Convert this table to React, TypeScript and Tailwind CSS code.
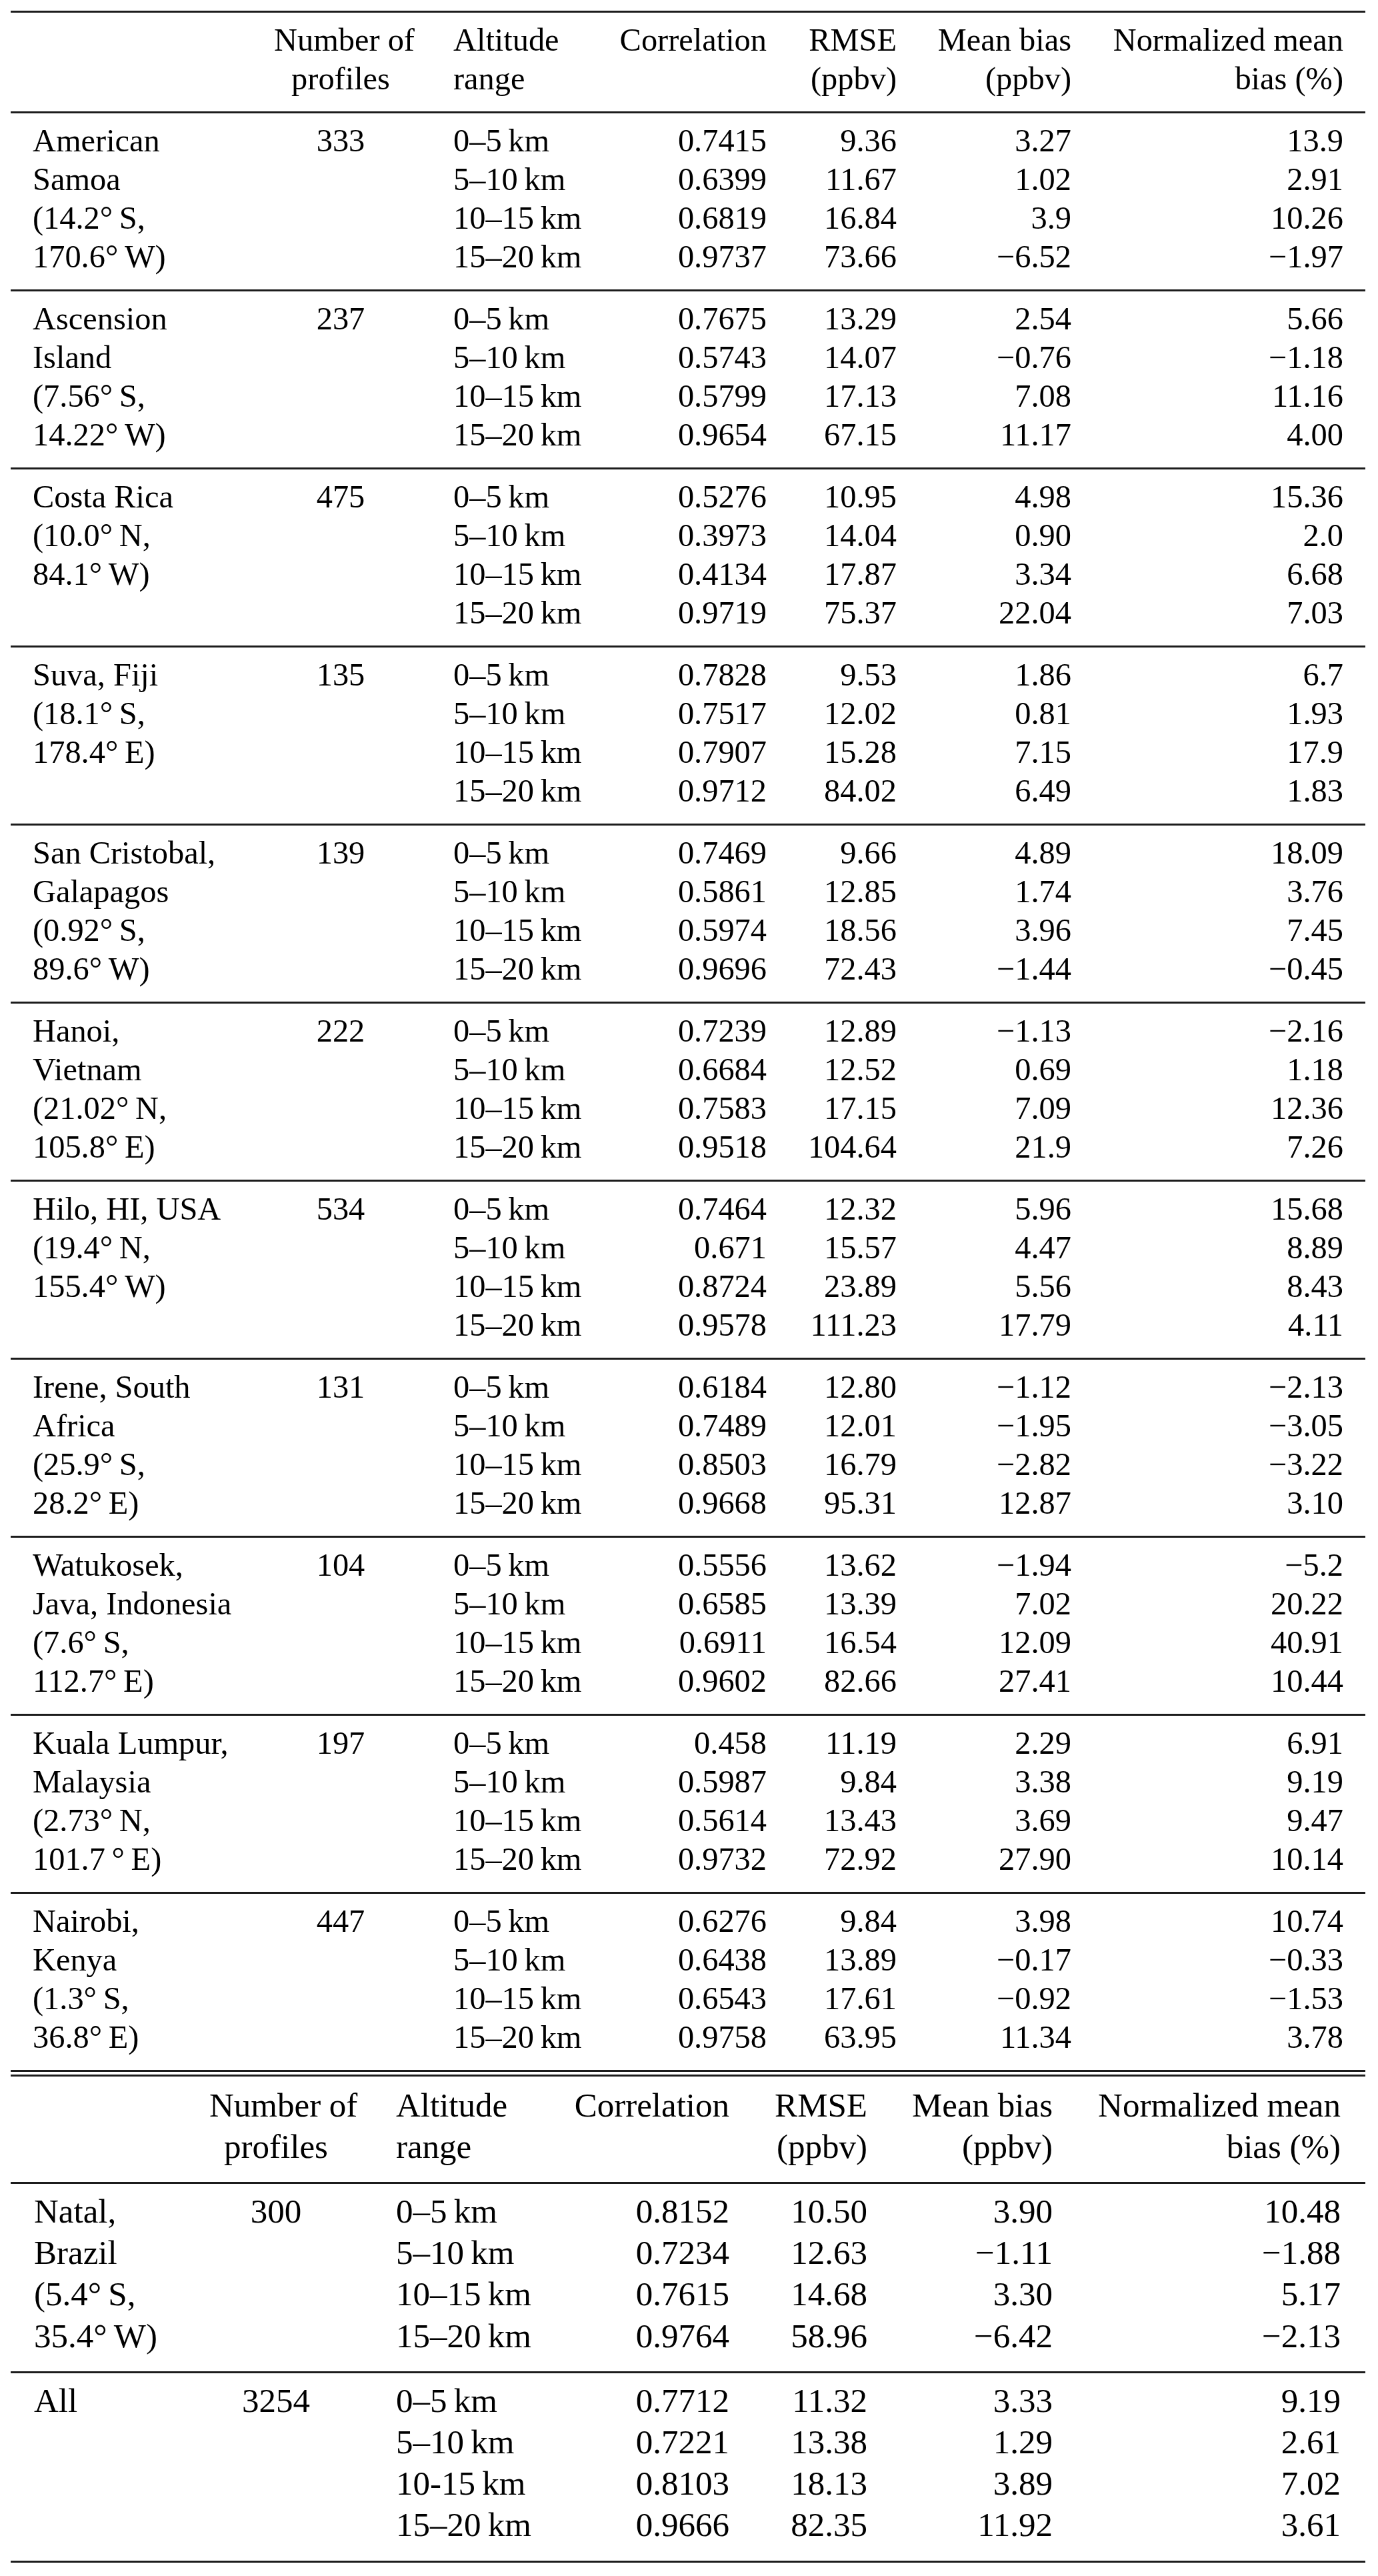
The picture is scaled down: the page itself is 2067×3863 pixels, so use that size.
import React from "react";

type Block = {
  name: string[];
  n: string;
  alt: string[];
  rows: string[][];
};

const T = "\u2009";
const M = "\u2212";
const ALT = [`0–5${T}km`, `5–10${T}km`, `10–15${T}km`, `15–20${T}km`];

const table1: Block[] = [
  {
    name: ["American", "Samoa", `(14.2°${T}S,`, `170.6°${T}W)`],
    n: "333",
    alt: ALT,
    rows: [
      ["0.7415", "9.36", "3.27", "13.9"],
      ["0.6399", "11.67", "1.02", "2.91"],
      ["0.6819", "16.84", "3.9", "10.26"],
      ["0.9737", "73.66", `${M}6.52`, `${M}1.97`],
    ],
  },
  {
    name: ["Ascension", "Island", `(7.56°${T}S,`, `14.22°${T}W)`],
    n: "237",
    alt: ALT,
    rows: [
      ["0.7675", "13.29", "2.54", "5.66"],
      ["0.5743", "14.07", `${M}0.76`, `${M}1.18`],
      ["0.5799", "17.13", "7.08", "11.16"],
      ["0.9654", "67.15", "11.17", "4.00"],
    ],
  },
  {
    name: ["Costa Rica", `(10.0°${T}N,`, `84.1°${T}W)`],
    n: "475",
    alt: ALT,
    rows: [
      ["0.5276", "10.95", "4.98", "15.36"],
      ["0.3973", "14.04", "0.90", "2.0"],
      ["0.4134", "17.87", "3.34", "6.68"],
      ["0.9719", "75.37", "22.04", "7.03"],
    ],
  },
  {
    name: ["Suva, Fiji", `(18.1°${T}S,`, `178.4°${T}E)`],
    n: "135",
    alt: ALT,
    rows: [
      ["0.7828", "9.53", "1.86", "6.7"],
      ["0.7517", "12.02", "0.81", "1.93"],
      ["0.7907", "15.28", "7.15", "17.9"],
      ["0.9712", "84.02", "6.49", "1.83"],
    ],
  },
  {
    name: ["San Cristobal,", "Galapagos", `(0.92°${T}S,`, `89.6°${T}W)`],
    n: "139",
    alt: ALT,
    rows: [
      ["0.7469", "9.66", "4.89", "18.09"],
      ["0.5861", "12.85", "1.74", "3.76"],
      ["0.5974", "18.56", "3.96", "7.45"],
      ["0.9696", "72.43", `${M}1.44`, `${M}0.45`],
    ],
  },
  {
    name: ["Hanoi,", "Vietnam", `(21.02°${T}N,`, `105.8°${T}E)`],
    n: "222",
    alt: ALT,
    rows: [
      ["0.7239", "12.89", `${M}1.13`, `${M}2.16`],
      ["0.6684", "12.52", "0.69", "1.18"],
      ["0.7583", "17.15", "7.09", "12.36"],
      ["0.9518", "104.64", "21.9", "7.26"],
    ],
  },
  {
    name: ["Hilo, HI, USA", `(19.4°${T}N,`, `155.4°${T}W)`],
    n: "534",
    alt: ALT,
    rows: [
      ["0.7464", "12.32", "5.96", "15.68"],
      ["0.671", "15.57", "4.47", "8.89"],
      ["0.8724", "23.89", "5.56", "8.43"],
      ["0.9578", "111.23", "17.79", "4.11"],
    ],
  },
  {
    name: ["Irene, South", "Africa", `(25.9°${T}S,`, `28.2°${T}E)`],
    n: "131",
    alt: ALT,
    rows: [
      ["0.6184", "12.80", `${M}1.12`, `${M}2.13`],
      ["0.7489", "12.01", `${M}1.95`, `${M}3.05`],
      ["0.8503", "16.79", `${M}2.82`, `${M}3.22`],
      ["0.9668", "95.31", "12.87", "3.10"],
    ],
  },
  {
    name: ["Watukosek,", "Java, Indonesia", `(7.6°${T}S,`, `112.7°${T}E)`],
    n: "104",
    alt: ALT,
    rows: [
      ["0.5556", "13.62", `${M}1.94`, `${M}5.2`],
      ["0.6585", "13.39", "7.02", "20.22"],
      ["0.6911", "16.54", "12.09", "40.91"],
      ["0.9602", "82.66", "27.41", "10.44"],
    ],
  },
  {
    name: ["Kuala Lumpur,", "Malaysia", `(2.73°${T}N,`, `101.7${T}°${T}E)`],
    n: "197",
    alt: ALT,
    rows: [
      ["0.458", "11.19", "2.29", "6.91"],
      ["0.5987", "9.84", "3.38", "9.19"],
      ["0.5614", "13.43", "3.69", "9.47"],
      ["0.9732", "72.92", "27.90", "10.14"],
    ],
  },
  {
    name: ["Nairobi,", "Kenya", `(1.3°${T}S,`, `36.8°${T}E)`],
    n: "447",
    alt: ALT,
    rows: [
      ["0.6276", "9.84", "3.98", "10.74"],
      ["0.6438", "13.89", `${M}0.17`, `${M}0.33`],
      ["0.6543", "17.61", `${M}0.92`, `${M}1.53`],
      ["0.9758", "63.95", "11.34", "3.78"],
    ],
  },
];

const table2: Block[] = [
  {
    name: ["Natal,", "Brazil", `(5.4°${T}S,`, `35.4°${T}W)`],
    n: "300",
    alt: ALT,
    rows: [
      ["0.8152", "10.50", "3.90", "10.48"],
      ["0.7234", "12.63", `${M}1.11`, `${M}1.88`],
      ["0.7615", "14.68", "3.30", "5.17"],
      ["0.9764", "58.96", `${M}6.42`, `${M}2.13`],
    ],
  },
  {
    name: ["All"],
    n: "3254",
    alt: [`0–5${T}km`, `5–10${T}km`, `10-15${T}km`, `15–20${T}km`],
    rows: [
      ["0.7712", "11.32", "3.33", "9.19"],
      ["0.7221", "13.38", "1.29", "2.61"],
      ["0.8103", "18.13", "3.89", "7.02"],
      ["0.9666", "82.35", "11.92", "3.61"],
    ],
  },
];

type Layout = {
  grid: string;
  c1: string;
  c3: string;
  c7: string;
  pad: string;
  headPad: string;
};

const L1: Layout = {
  grid: "grid grid-cols-[395px_200px_289px_250px_195px_262px_441px]",
  c1: "pl-[33px]",
  c3: "pl-[69px]",
  c7: "pr-[33px]",
  pad: "pt-[12px] pb-[19px]",
  headPad: "pt-[12px] pb-[19px]",
};

const L2: Layout = {
  grid: "grid grid-cols-[298px_200px_346px_234px_207px_278px_469px]",
  c1: "pl-[35px]",
  c3: "pl-[80px]",
  c7: "pr-[37px]",
  pad: "pt-[10px] pb-[22px]",
  headPad: "pt-[12px] pb-[22px]",
};

function Lines({ items }: { items: string[] }) {
  return (
    <>
      {items.map((s, i) => (
        <div key={i} className="whitespace-nowrap">
          {s}
        </div>
      ))}
    </>
  );
}

function Header({ L }: { L: Layout }) {
  return (
    <div className={`${L.grid} ${L.headPad}`}>
      <div className={L.c1}></div>
      <div className="text-center">
        <Lines items={["Number of", "profiles"]} />
      </div>
      <div className={L.c3}>
        <Lines items={["Altitude", "range"]} />
      </div>
      <div className="text-right">
        <Lines items={["Correlation"]} />
      </div>
      <div className="text-right">
        <Lines items={["RMSE", "(ppbv)"]} />
      </div>
      <div className="text-right">
        <Lines items={["Mean bias", "(ppbv)"]} />
      </div>
      <div className={`text-right ${L.c7}`}>
        <Lines items={["Normalized mean", "bias (%)"]} />
      </div>
    </div>
  );
}

function BlockRow({ b, L }: { b: Block; L: Layout }) {
  return (
    <div className={`${L.grid} ${L.pad} border-t-[3px] border-[#1c1c1c]`}>
      <div className={L.c1}>
        <Lines items={b.name} />
      </div>
      <div className="text-center">
        <Lines items={[b.n]} />
      </div>
      <div className={L.c3}>
        <Lines items={b.alt} />
      </div>
      <div className="text-right">
        <Lines items={b.rows.map((r) => r[0])} />
      </div>
      <div className="text-right">
        <Lines items={b.rows.map((r) => r[1])} />
      </div>
      <div className="text-right">
        <Lines items={b.rows.map((r) => r[2])} />
      </div>
      <div className={`text-right ${L.c7}`}>
        <Lines items={b.rows.map((r) => r[3])} />
      </div>
    </div>
  );
}

export default function App() {
  return (
    <div className="min-h-[3863px] w-[2067px] bg-white text-black font-['Liberation_Serif','Times_New_Roman',Times,serif]">
      <div className="ml-[16px] w-[2032px] pt-[16px]">
        <div className="font-['Liberation_Serif','Times_New_Roman',Times,serif] text-[48.4px] leading-[58.25px] border-t-[3px] border-b-[3px] border-[#1c1c1c]">
          <Header L={L1} />
          {table1.map((b, i) => (
            <BlockRow key={i} b={b} L={L1} />
          ))}
        </div>
        <div className="font-['Liberation_Serif','Times_New_Roman',Times,serif] mt-[4px] text-[51px] leading-[62.2px] border-t-[3px] border-b-[3px] border-[#1c1c1c]">
          <Header L={L2} />
          {table2.map((b, i) => (
            <BlockRow key={i} b={b} L={L2} />
          ))}
        </div>
      </div>
    </div>
  );
}
